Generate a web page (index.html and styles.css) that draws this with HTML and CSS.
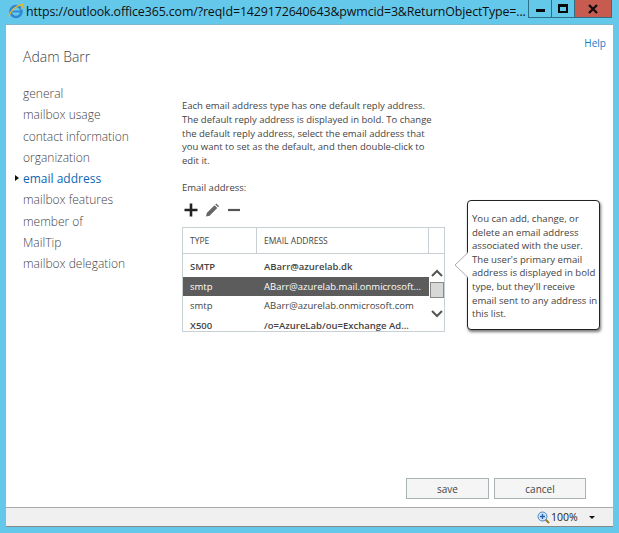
FILE: index.html
```html
<!DOCTYPE html>
<html lang="en">
<head>
<meta charset="utf-8">
<title>Adam Barr</title>
<link rel="stylesheet" href="styles.css">
</head>
<body>
<div class="window">
  <header class="titlebar">
    <svg class="ie" width="18" height="18" viewBox="0 0 18 18"><circle cx="9" cy="9.500" r="5.500" fill="none" stroke="#2f86d6" stroke-width="2.600"/><path d="M4 9.500h10" stroke="#2f86d6" stroke-width="1.800"/><path d="M2 14.500C3 9 9 3.500 15.500 2.200c1.500 1-.2 3.500-1.500 5" fill="none" stroke="#e8b52c" stroke-width="1.400"/></svg>
    <div class="url">https://outlook.office365.com/?reqId=1429172640643&amp;pwmcid=3&amp;ReturnObjectType=...</div>
    <div class="controls">
      <div class="ctl"><span class="min"></span></div>
      <div class="ctl"><span class="max"></span></div>
      <div class="ctl close">
        <svg width="12" height="10" viewBox="0 0 12 10"><path d="M2 1l8 8M10 1l-8 8" stroke="#111" stroke-width="2.400"/></svg>
      </div>
    </div>
  </header>
  <main class="page">
    <a class="help">Help</a>
    <div class="columns">
      <nav class="side">
        <h1 class="name">Adam Barr</h1>
        <ul class="menu">
          <li>general</li>
          <li>mailbox usage</li>
          <li>contact information</li>
          <li>organization</li>
          <li class="active">email address</li>
          <li>mailbox features</li>
          <li>member of</li>
          <li>MailTip</li>
          <li>mailbox delegation</li>
        </ul>
      </nav>
      <section class="content">
        <p class="intro">Each email address type has one default reply address. The default reply address is displayed in bold. To change the default reply address, select the email address that you want to set as the default, and then double-click to edit it.</p>
        <div class="label">Email address:</div>
        <div class="tools">
          <svg width="14" height="14" viewBox="0 0 14 14"><path d="M7 .5v13M.5 7h13" stroke="#222" stroke-width="2.600"/></svg>
          <svg width="15" height="14" viewBox="0 0 15 14"><path d="M1 13.500l.8-3.600 7.700-7.700 2.800 2.800-7.700 7.700zM10.300 1.400l1-1 2.800 2.800-1 1z" fill="#666"/></svg>
          <svg width="14" height="14" viewBox="0 0 14 14"><path d="M1 7h12" stroke="#555" stroke-width="2.200"/></svg>
        </div>
        <div class="table">
          <div class="thead">
            <div class="th c1">TYPE</div>
            <div class="th c2">EMAIL ADDRESS</div>
            <div class="th c3"></div>
          </div>
          <div class="tbody">
            <div class="rows">
              <div class="row bold"><span class="c1">SMTP</span><span class="c2">ABarr@azurelab.dk</span></div>
              <div class="row sel"><span class="c1">smtp</span><span class="c2">ABarr@azurelab.mail.onmicrosoft...</span></div>
              <div class="row"><span class="c1">smtp</span><span class="c2">ABarr@azurelab.onmicrosoft.com</span></div>
              <div class="row bold"><span class="c1">X500</span><span class="c2">/o=AzureLab/ou=Exchange Ad...</span></div>
            </div>
            <div class="scroll">
              <svg width="12" height="8" viewBox="0 0 12 8"><path d="M1 7l5-5 5 5" fill="none" stroke="#555" stroke-width="2"/></svg>
              <div class="thumb"></div>
              <svg width="12" height="8" viewBox="0 0 12 8"><path d="M1 1l5 5 5-5" fill="none" stroke="#555" stroke-width="2"/></svg>
            </div>
          </div>
        </div>
      </section>
    </div>
    <aside class="tip">
      <svg class="arrow" width="14" height="26" viewBox="0 0 14 26"><path d="M14 .5L1 13l13 12.500z" fill="#fff"/><path d="M14 .5L1 13l13 12.500" fill="none" stroke="#aaa"/></svg>
      You can add, change, or<br>delete an email address<br>associated with the user.<br>The user's primary email<br>address is displayed in bold<br>type, but they'll receive<br>email sent to any address in<br>this list.
    </aside>
    <footer class="actions">
      <button class="btn">save</button>
      <button class="btn">cancel</button>
    </footer>
  </main>
  <div class="status">
    <svg width="13" height="13" viewBox="0 0 13 13"><path d="M8 8l4 4" stroke="#a8762a" stroke-width="2"/><circle cx="5.500" cy="5.500" r="4.500" fill="#cfe3f7" stroke="#4d87c4"/><path d="M5.500 3v5M3 5.500h5" stroke="#2a5fa8" stroke-width="1.300"/></svg>
    <span class="zoom">100%</span>
    <span class="drop"></span>
  </div>
</div>
</body>
</html>
```
FILE: styles.css
```css
* { box-sizing: border-box; }
html, body { margin: 0; height: 100%; }
body { background: #64c8ea; font-family: "Open Sans", "Noto Sans", sans-serif; overflow: hidden; }
.window { width: 619px; height: 533px; display: flex; flex-direction: column; padding: 0 6px 6px; }
.titlebar { height: 25px; flex: none; display: flex; align-items: flex-start; border-bottom: 1px solid #7fb4cc; }
.ie { margin: 2px 0 0 1px; flex: none; }
.url { margin: 3px 0 0 0; padding-left: 1px; font: 12.400px/18px "Open Sans", sans-serif; color: #111; white-space: nowrap; letter-spacing: -.12px; }
.controls { display: flex; margin-left: auto; height: 18px; margin-right: 1px; flex: none; }
.ctl { width: 24px; height: 18px; border: 1px solid #2e6f88; border-top: 0; margin-left: -1px; display: flex; align-items: center; justify-content: center; }
.ctl.close { width: 38px; background: #c75b50; }
.min { width: 9px; height: 3px; background: #0a0a0a; margin-top: 3px; }
.max { width: 10px; height: 9px; border: 2px solid #0a0a0a; border-top-width: 3px; }
.page { position: relative; flex: 1; background: #fff; display: flex; flex-direction: column; min-height: 0; }
.help { position: absolute; top: 11px; right: 7px; font-size: 10px; line-height: 14px; color: #1a7ac8; }
.columns { display: flex; flex: 1; min-height: 0; }
.side { width: 176px; flex: none; padding: 22px 0 0 17px; }
.name { margin: 0 0 16px; font-size: 14px; line-height: 20px; font-weight: 300; color: #444; }
.menu { list-style: none; margin: 0; padding: 0; }
.menu li { position: relative; height: 21.250px; font-size: 12px; line-height: 21px; font-weight: 300; color: #444; white-space: nowrap; }
.menu .active { color: #0b68b4; font-weight: 400; }
.menu .active::before { content: ""; position: absolute; left: -8px; top: 7px; border-left: 4px solid #111; border-top: 3.500px solid transparent; border-bottom: 3.500px solid transparent; }
.content { width: 265px; padding-top: 74px; }
.intro { margin: 0; font-size: 9.500px; line-height: 13.750px; color: #444; width: 256px; }
.label { margin-top: 13px; font-size: 9.500px; line-height: 13px; color: #444; }
.tools { display: flex; gap: 7px; align-items: center; margin-top: 8px; height: 16px; padding-left: 2px; }
.table { margin-top: 9px; width: 263px; height: 105px; border: 1px solid #c8d0d4; font-size: 9.500px; color: #444; display: flex; flex-direction: column; }
.thead { display: flex; height: 26px; flex: none; border-bottom: 1px solid #c8d0d4; }
.th { display: flex; align-items: center; height: 25px; }
.th.c1 { width: 74px; padding-left: 7px; border-right: 1px solid #c8d0d4; font-size: 8.500px; }
.th.c2 { width: 172px; padding-left: 7px; border-right: 1px solid #c8d0d4; font-size: 8.500px; }
.th.c3 { flex: 1; }
.tbody { display: flex; flex: 1; min-height: 0; overflow: hidden; }
.rows { width: 246px; padding-top: 4px; overflow: hidden; }
.row { display: flex; height: 19.300px; align-items: center; white-space: nowrap; line-height: 12px; }
.row:last-child { height: 15px; align-items: flex-start; padding-top: 4px; line-height: 11px; }
.row .c1 { width: 74px; padding-left: 7px; flex: none; }
.row .c2 { padding-left: 7px; }
.row.bold { font-weight: 600; }
.row.sel { background: #5c5c5c; color: #fff; }
.scroll { flex: 1; display: flex; flex-direction: column; align-items: center; padding-top: 15px; }
.scroll svg { flex: none; }
.thumb { width: 14px; height: 16px; flex: none; background: #d8d8d8; border: 1px solid #888; margin: 5px 0 12px; }
.tip { position: absolute; left: 461px; top: 175px; width: 133px; height: 130px; padding: 11px 0 0 4px; background: #fff; border: 1px solid #222; border-radius: 4px; box-shadow: 1px 2px 3px #777; font-size: 9.600px; line-height: 13.600px; color: #444; white-space: nowrap; }
.arrow { position: absolute; left: -14px; top: 51px; }
.actions { display: flex; justify-content: flex-end; gap: 5px; padding: 0 27px 8px 0; flex: none; }
.btn { width: 83px; height: 21px; padding: 0; background: #f5f5f5; border: 1px solid #a9b3b3; font: 400 10px "Open Sans", sans-serif; color: #444; }
.btn + .btn { width: 92px; }
.status { height: 20px; flex: none; background: #f0f0f0; border-top: 1px solid #aaa; border-bottom: 1px solid #888; display: flex; align-items: center; padding-left: 531px; font: 10px "Open Sans", sans-serif; color: #222; }
.zoom { margin-left: 1px; font-size: 10.500px; }
.drop { margin-left: 11px; border-top: 3px solid #111; border-left: 3.500px solid transparent; border-right: 3.500px solid transparent; }
```
